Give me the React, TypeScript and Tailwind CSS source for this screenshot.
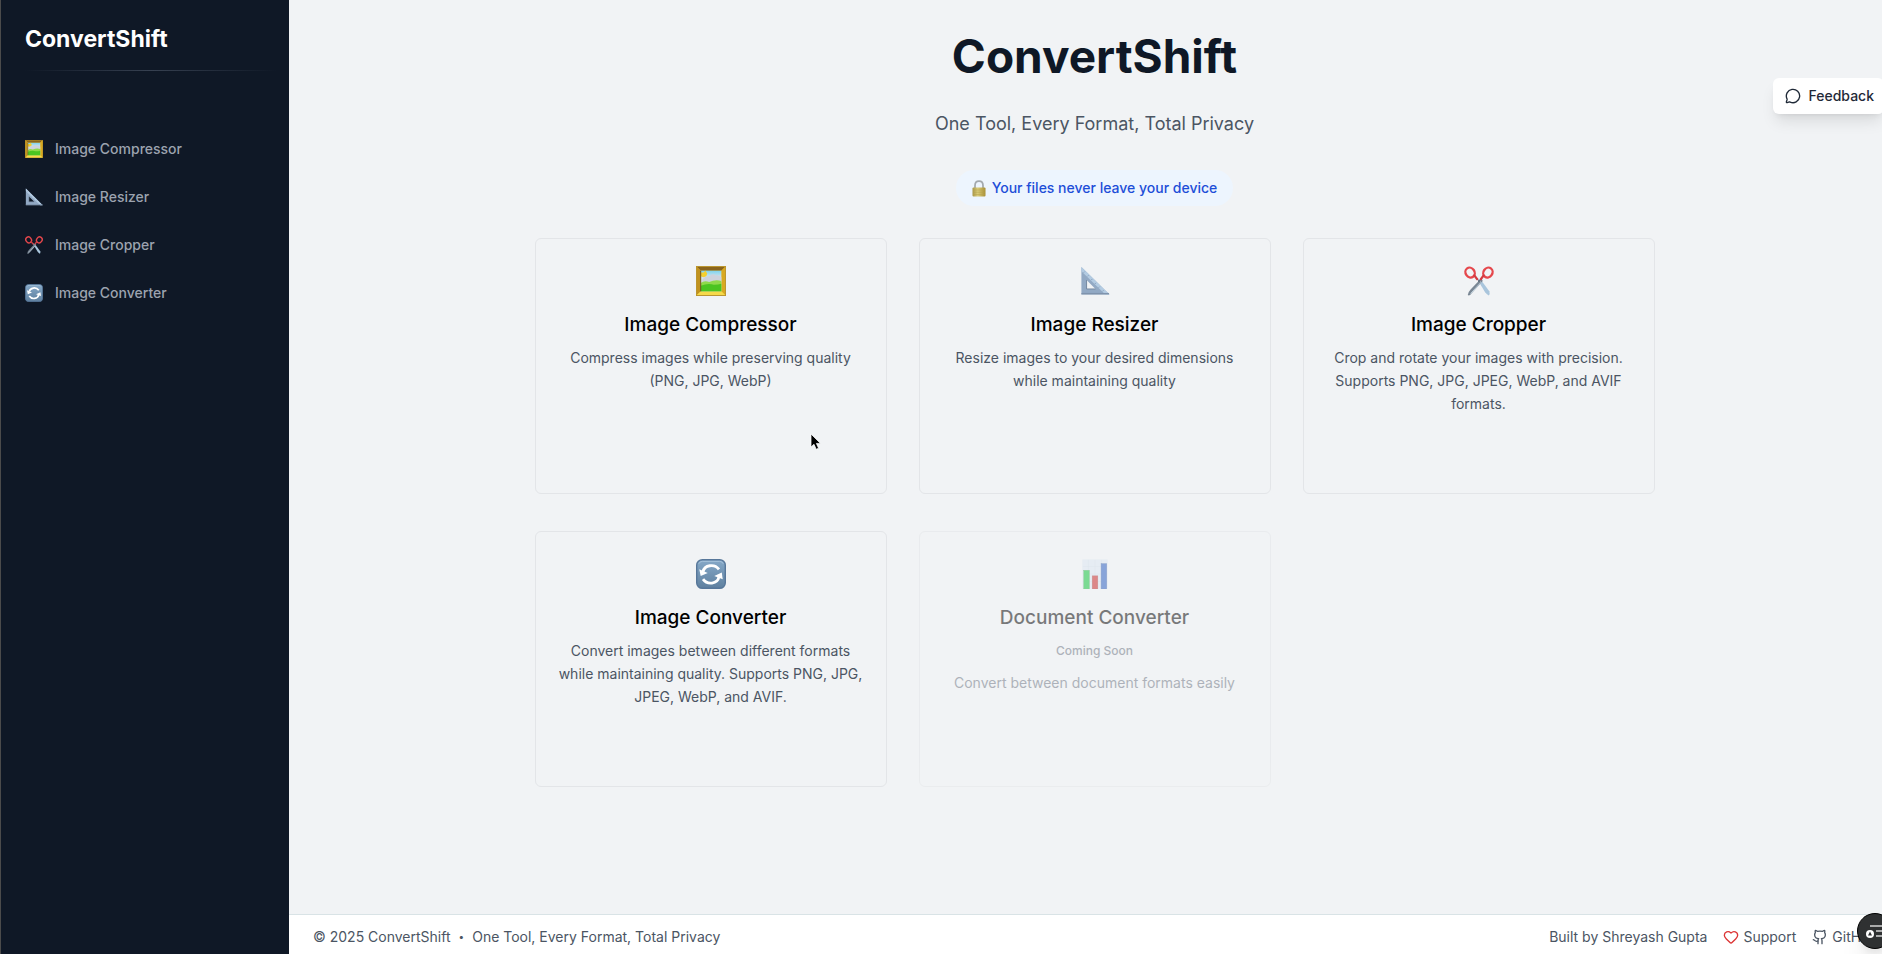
import { useId } from 'react';
import { MessageCircle, Heart } from 'lucide-react';

type IconProps = { className?: string };

function PictureIcon({ className }: IconProps) {
  const id = useId();
  return (
    <svg viewBox="0 0 32 32" className={className} aria-hidden="true">
      <defs>
        <linearGradient id={id} x1="0" y1="0" x2="0" y2="1">
          <stop offset="0" stopColor="#7fd3ec" />
          <stop offset="0.35" stopColor="#d9e4ee" />
          <stop offset="0.55" stopColor="#d3dcdf" />
        </linearGradient>
      </defs>
      <rect x="0.5" y="0.5" width="31" height="31" fill="#e9bf2c" stroke="#b8922a" />
      <path d="M1 1H31L27 5H5Z" fill="#8a641c" />
      <path d="M1 1L5.500 5V27L1 31Z" fill="#c1921f" />
      <path d="M31 1V31L27 27V5Z" fill="#d9a921" />
      <path d="M1 31L5 27H27L31 31Z" fill="#f6d94a" />
      <rect x="5" y="5" width="22" height="22" fill={`url(#${id})`} />
      <path d="M5 7H8L10 5L12 8L11 11L8 12L5 11Z" fill="#f5cf2e" />
      <path d="M7 14Q10 10 14 11Q18 7 21 10Q24 9 27 12V17H7Z" fill="#cdd2dc" />
      <path d="M5 18Q9 15 14 17Q21 14 27 16V27H5Z" fill="#8fd94b" />
      <path d="M5 21Q13 18 19 20Q24 20 27 19V27H5Z" fill="#4bc421" />
      <path d="M5 5V27" stroke="#6b4a12" strokeWidth="1" />
    </svg>
  );
}

function TriangleIcon({ className }: IconProps) {
  return (
    <svg viewBox="0 0 32 32" className={className} aria-hidden="true">
      <path d="M1.500 1L31.500 30.500H1.500Z M7 15V24.500H16.500Z" fill="#92a9c4" fillRule="evenodd" />
      <path d="M1.500 1L31.500 30.500H27L1.500 5.500Z" fill="#b3cbe2" />
      <path d="M1.500 29.500H31" stroke="#7f93ac" strokeWidth="1.500" />
      <path d="M7 15V24.500H16.500" stroke="#70839c" strokeWidth="1" fill="none" />
      <path d="M5 6l-1 1M9 10l-1 1M13 14l-1 1M17 18l-1 1M21 22l-1 1M25 26l-1 1" stroke="#8098b3" strokeWidth="1" />
    </svg>
  );
}

function ScissorsIcon({ className }: IconProps) {
  return (
    <svg viewBox="0 0 32 32" className={className} aria-hidden="true">
      <path d="M13.500 13L17.500 14L27 27Q28 30 26.500 31.500Q24.500 30.500 22.500 28Z" fill="#a9c5dc" />
      <path d="M18.500 13L20 16L6.500 31Q5 32 4 31Q4.500 27.500 7 25Z" fill="#7a8794" />
      <path d="M16.500 16L18 17.500L7 29.500" stroke="#c4d5e2" strokeWidth="1" fill="none" />
      <ellipse cx="6.500" cy="7" rx="4.750" ry="5.500" transform="rotate(-35 6.500 7)" fill="none" stroke="#e5474c" strokeWidth="2.500" />
      <ellipse cx="25.500" cy="7" rx="4.750" ry="5.500" transform="rotate(35 25.500 7)" fill="none" stroke="#e5474c" strokeWidth="2.500" />
      <path d="M11 10L14 14M21 10L18 14" stroke="#d33c42" strokeWidth="2.500" strokeLinecap="round" />
      <circle cx="16" cy="16" r="1" fill="#56616d" />
    </svg>
  );
}

function RefreshIcon({ className }: IconProps) {
  const id = useId();
  return (
    <svg viewBox="0 0 32 32" className={className} aria-hidden="true">
      <defs>
        <linearGradient id={id} x1="0" y1="0" x2="0" y2="1">
          <stop offset="0" stopColor="#86a9c8" />
          <stop offset="1" stopColor="#5f809f" />
        </linearGradient>
      </defs>
      <rect x="0.750" y="0.750" width="30.500" height="30.500" rx="6" fill={`url(#${id})`} stroke="#57779a" strokeWidth="1.500" />
      <path d="M3 5Q4 2.500 7 2.500H25Q28 2.500 29 5" fill="none" stroke="#a9c4dc" strokeWidth="1" />
      <path d="M7.500 13.500C9 6.500 19.500 4.500 24.500 11" fill="none" stroke="#fff" strokeWidth="3" />
      <path d="M3.500 11L5 18L12.500 15Z" fill="#fff" />
      <path d="M24.500 19C23 27 12 28 7.500 21.500" fill="none" stroke="#fff" strokeWidth="3" />
      <path d="M28.500 21.500L27.500 14.500L19.500 18Z" fill="#fff" />
    </svg>
  );
}

function ChartIcon({ className }: IconProps) {
  return (
    <svg viewBox="0 0 32 32" className={className} aria-hidden="true">
      <rect x="2.500" y="0.500" width="27" height="31" fill="#dce7f2" />
      <path d="M9 1V31M16 1V31M23 1V31M3 8H29M3 16H29M3 24H29" stroke="#cbd8e6" strokeWidth="0.500" />
      <rect x="4" y="12" width="6" height="20" fill="#08c334" stroke="#35a44a" strokeWidth="0.500" />
      <rect x="13" y="18" width="6" height="14" fill="#c81e1e" stroke="#a02a2a" strokeWidth="0.500" />
      <rect x="22.500" y="5" width="6" height="27" fill="#2257bf" stroke="#28519b" strokeWidth="0.500" />
    </svg>
  );
}

function LockIcon({ className }: IconProps) {
  const id = useId();
  return (
    <svg viewBox="0 0 14 17" className={className} aria-hidden="true">
      <defs>
        <linearGradient id={id} x1="0" y1="0" x2="1" y2="0">
          <stop offset="0" stopColor="#a89648" />
          <stop offset="0.400" stopColor="#d9cb78" />
          <stop offset="1" stopColor="#a88f35" />
        </linearGradient>
      </defs>
      <path d="M3 9V5.500C3 -0.200 11 -0.200 11 5.500V9" fill="none" stroke="#a3a9ae" strokeWidth="1.750" />
      <rect x="0.500" y="7.500" width="13" height="9" rx="1" fill={`url(#${id})`} />
      <path d="M1 10H13M1 12.250H13M1 14.500H13" stroke="#b5a04a" strokeWidth="0.500" />
    </svg>
  );
}

function GitHubIcon({ className }: IconProps) {
  return (
    <svg viewBox="0 0 24 24" className={className} fill="none" stroke="currentColor" strokeWidth="2" strokeLinecap="round" strokeLinejoin="round" aria-hidden="true">
      <path d="M15 22v-4a4.800 4.800 0 0 0-1-3.500c3 0 6-2 6-5.500.08-1.250-.27-2.480-1-3.500.28-1.150.28-2.350 0-3.500 0 0-1 0-3 1.500-2.640-.5-5.360-.5-8 0C6 2 5 2 5 2c-.3 1.150-.3 2.350 0 3.500A5.403 5.403 0 0 0 4 9c0 3.500 3 5.500 6 5.500-.39.490-.68 1.050-.85 1.650-.17.600-.22 1.230-.15 1.850v4" />
      <path d="M9 18c-4.510 2-5-2-7-2" />
    </svg>
  );
}

const tools = [
  { name: 'Image Compressor', Icon: PictureIcon, text: 'Compress images while preserving quality (PNG, JPG, WebP)' },
  { name: 'Image Resizer', Icon: TriangleIcon, text: 'Resize images to your desired dimensions while maintaining quality' },
  { name: 'Image Cropper', Icon: ScissorsIcon, text: 'Crop and rotate your images with precision. Supports PNG, JPG, JPEG, WebP, and AVIF formats.' },
  { name: 'Image Converter', Icon: RefreshIcon, text: 'Convert images between different formats while maintaining quality. Supports PNG, JPG, JPEG, WebP, and AVIF.' },
];

function Sidebar() {
  return (
    <aside className="w-[289px] shrink-0 border-l border-[#4b4b4b] bg-[#0f1826] pt-[23px] pr-3 pl-6">
      <a href="#home" className="block text-[23px] leading-8 font-bold text-white">ConvertShift</a>
      <div className="mt-[15px] h-px bg-linear-to-r from-transparent via-[#374151] to-transparent" />
      <nav className="mt-[54px] flex flex-col">
        {tools.map(({ name, Icon }) => (
          <a key={name} href="#tool" className="flex h-12 items-center gap-3 text-sm font-medium text-[#9ca3af]">
            <Icon className="size-[18px]" />
            {name}
          </a>
        ))}
      </nav>
    </aside>
  );
}

const cardClass = 'flex h-64 flex-col items-center rounded-md border border-[#e3e5e8] px-5 pt-[27px] text-center';

export default function App() {
  return (
    <div className="relative flex min-h-screen overflow-hidden bg-[#f1f3f5] font-['Inter',sans-serif] antialiased">
      <Sidebar />
      <div className="-mr-[18px] flex min-w-0 flex-1 flex-col">
        <main className="flex flex-1 flex-col items-center px-4 pt-8">
          <h1 className="text-[46px] leading-12 font-bold text-[#0f1826]">ConvertShift</h1>
          <p className="mt-[30px] text-lg leading-7 text-[#4b5563]">One Tool, Every Format, Total Privacy</p>
          <div className="mt-8 flex h-9 items-center gap-1.5 rounded-full bg-[#edf5fe] px-4 text-sm font-medium text-[#1d4ed8]">
            <LockIcon className="h-[17px] w-3.5" />
            Your files never leave your device
          </div>
          <div className="mt-8 grid w-full max-w-[1120px] grid-cols-3 gap-x-8 gap-y-[37px]">
            {tools.map(({ name, Icon, text }) => (
              <a key={name} href="#tool" className={cardClass}>
                <Icon className="size-[30px]" />
                <h2 className="mt-[15px] text-[19px] leading-7 font-medium text-black">{name}</h2>
                <p className="mt-[7px] text-sm leading-[23px] text-[#4b5563]">{text}</p>
              </a>
            ))}
            <div className={`${cardClass} opacity-50`}>
              <ChartIcon className="size-[30px]" />
              <h2 className="mt-[15px] text-[19px] leading-7 font-medium text-black">Document Converter</h2>
              <span className="mt-[7px] text-xs leading-6 font-medium text-[#6b7280]">Coming Soon</span>
              <p className="mt-2 text-sm leading-[23px] text-[#6b7280]">Convert between document formats easily</p>
            </div>
          </div>
        </main>
        <footer className="flex h-10 items-center justify-between border-t border-[#d9e3e6] bg-white pt-1 pr-[22px] pl-6 text-sm text-[#4b5563]">
          <div className="flex items-center gap-2">
            <span>© 2025 ConvertShift</span>
            <span className="text-[10px]">•</span>
            <span>One Tool, Every Format, Total Privacy</span>
          </div>
          <div className="flex gap-4">
            <span>Built by Shreyash Gupta</span>
            <a href="#support" className="flex items-center gap-1">
              <Heart className="size-4 text-[#dc3434]" />
              Support
            </a>
            <a href="#github" className="flex items-center gap-1">
              <GitHubIcon className="size-4" />
              GitHub
            </a>
          </div>
        </footer>
      </div>

      <button type="button" className="absolute top-[78px] -right-0.5 flex h-9 items-center gap-2 rounded-md bg-white pr-2.5 pl-3 text-sm font-medium text-[#1f2937] shadow-lg">
        <MessageCircle className="size-4" />
        Feedback
      </button>

      <button type="button" aria-label="Open menu" className="absolute -right-[11px] bottom-[5px] flex size-9 items-center justify-center rounded-full border border-black bg-[#2f3132] shadow-xl">
        <svg viewBox="0 0 24 24" className="size-6 shrink-0" aria-hidden="true">
          <path d="M7 7H21M13 12H21M13 17H21" stroke="#d4d4d4" strokeWidth="1.500" />
          <circle cx="7" cy="15" r="4" fill="#fff" />
          <path d="M7 12.500L9 16.500H5Z" fill="#2f3132" />
        </svg>
      </button>

      <svg viewBox="0 0 12 18" className="pointer-events-none absolute top-[433px] left-[810px] h-[18px] w-3" aria-hidden="true">
        <path d="M1 1V14L4 11.300L6.200 16.300L8.600 15.200L6.400 10.400H10.500Z" fill="#000" stroke="#fff" strokeWidth="0.750" />
      </svg>
    </div>
  );
}
